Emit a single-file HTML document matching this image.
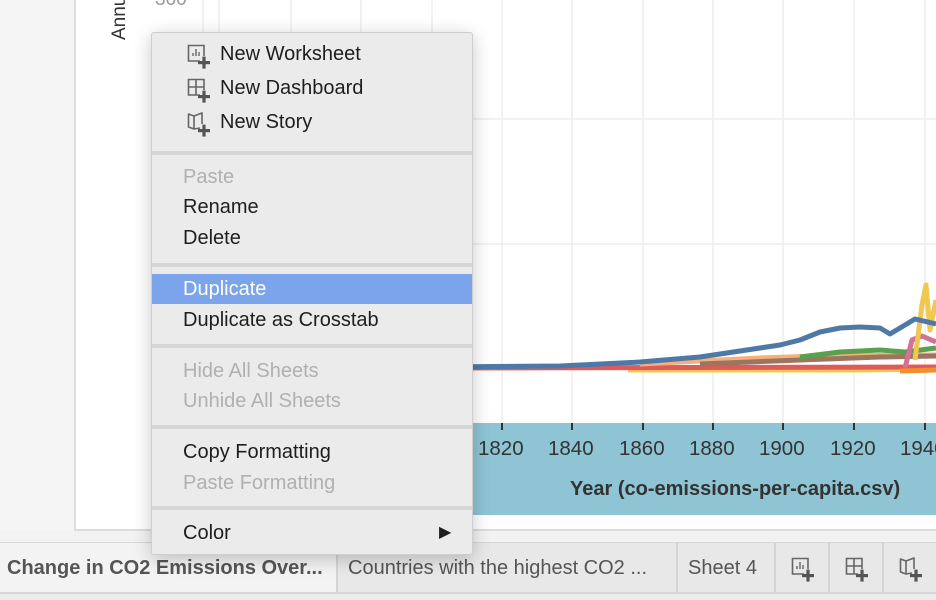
<!DOCTYPE html>
<html><head><meta charset="utf-8"><style>
*{margin:0;padding:0;box-sizing:border-box}
body{width:936px;height:600px;overflow:hidden;background:#f5f5f5;font-family:"Liberation Sans",sans-serif;position:relative}
.abs{position:absolute}
.menu{left:151px;top:32px;width:322px;height:523px;background:#ebebeb;border:1px solid #cfcfcf;box-shadow:0 4px 18px rgba(0,0,0,.22);border-radius:3px}
.mi{position:absolute;left:31px;font-size:20px;color:#1e1e1e;line-height:24px;white-space:nowrap}
.dis{color:#b0b0b0}
.sep{position:absolute;left:0;right:0;height:4px;background:#d6d6d6}
.tab{position:absolute;top:543px;height:49px;font-size:20px;line-height:51px;color:#555;border-right:2px solid #d4d4d4;white-space:nowrap;overflow:hidden}
.yr{position:absolute;top:437px;font-size:20.5px;color:#333}
</style></head><body>
<div class="abs" style="left:74px;top:0;width:862px;height:531px;background:#fff;border-left:2px solid #ddd;border-bottom:2px solid #ddd"></div>
<svg class="abs" style="left:0;top:0" width="936" height="531">
<g stroke="#eeeeee" stroke-width="1.5">
<line x1="203" y1="0" x2="203" y2="423"/>
<line x1="219" y1="0" x2="219" y2="423"/><line x1="291" y1="0" x2="291" y2="423"/><line x1="361" y1="0" x2="361" y2="423"/><line x1="432" y1="0" x2="432" y2="423"/><line x1="502" y1="0" x2="502" y2="423"/><line x1="572" y1="0" x2="572" y2="423"/><line x1="643" y1="0" x2="643" y2="423"/><line x1="713" y1="0" x2="713" y2="423"/><line x1="783" y1="0" x2="783" y2="423"/><line x1="854" y1="0" x2="854" y2="423"/><line x1="925" y1="0" x2="925" y2="423"/>
<line x1="203" y1="119" x2="936" y2="119"/><line x1="203" y1="244" x2="936" y2="244"/>
</g>
<rect x="203" y="423" width="733" height="92" fill="#8ec4d4"/>
<g stroke="#333" stroke-width="2"><line x1="502" y1="423" x2="502" y2="430"/><line x1="572" y1="423" x2="572" y2="430"/><line x1="643" y1="423" x2="643" y2="430"/><line x1="713" y1="423" x2="713" y2="430"/><line x1="783" y1="423" x2="783" y2="430"/><line x1="854" y1="423" x2="854" y2="430"/><line x1="925" y1="423" x2="925" y2="430"/></g>
<g fill="none" stroke-width="5" stroke-linejoin="round">
<polyline stroke="#f0c850" points="628,370 860,370 936,369"/>
<polyline stroke="#e05a5a" points="440,368 936,367"/>
<polyline stroke="#f6b07a" points="640,364 760,358 820,356 936,355"/>
<polyline stroke="#9c7560" points="700,364 800,360 880,357 936,356"/>
<polyline stroke="#59a14f" points="800,357 840,352 880,350 905,352 936,348"/>
<polyline stroke="#d37295" points="905,368 912,340 922,336 936,342"/>
<polyline stroke="#f0c850" points="915,360 922,305 926,285 930,330 936,300"/>
<polyline stroke="#f28e2b" points="900,371 936,370"/>
<polyline stroke="#4e79a7" points="440,367 560,366 640,362 700,357 740,351 780,345 800,340 820,332 840,328 860,327 880,328 890,334 900,328 915,319 936,324"/>
</g>
<text transform="translate(125,40) rotate(-90)" font-size="19" fill="#333" font-family="Liberation Sans">Annual</text>
<text x="155" y="5" font-size="19" fill="#999" font-family="Liberation Sans">300</text>
</svg>
<div class="yr" style="left:478px">1820</div><div class="yr" style="left:548px">1840</div><div class="yr" style="left:619px">1860</div><div class="yr" style="left:689px">1880</div><div class="yr" style="left:759px">1900</div><div class="yr" style="left:830px">1920</div><div class="yr" style="left:900px">1940</div>
<div class="abs" style="left:570px;top:478px;font-size:20px;color:#333;font-weight:bold">Year (co-emissions-per-capita.csv)</div>
<div class="abs" style="left:0;top:531px;width:936px;height:12px;background:#f2f2f2;border-bottom:1px solid #d8d8d8"></div>
<div class="abs" style="left:0;top:543px;width:936px;height:49px;background:#e8e8e8"></div>
<div class="tab" style="left:0;width:338px;background:#f3f3f3;font-weight:bold;padding-left:7px;color:#555">Change in CO2 Emissions Over...</div>
<div class="tab" style="left:338px;width:340px;padding-left:10px">Countries with the highest CO2 ...</div>
<div class="tab" style="left:678px;width:98px;padding-left:10px">Sheet 4</div>
<div class="tab" style="left:776px;width:54px"></div>
<div class="tab" style="left:830px;width:54px"></div>
<div class="abs" style="left:0;top:592px;width:936px;height:8px;background:#ececec;border-top:2px solid #d6d6d6"></div>
<svg class="abs" style="left:0;top:0" width="936" height="600">
<defs>
<g id="plus"><rect x="11" y="17" width="12" height="3.2" fill="#555"/><rect x="15.4" y="12.6" width="3.2" height="12" fill="#555"/></g>
<g id="ws"><path d="M13 17 H1.5 V1.5 H17 V12" fill="none" stroke="#666" stroke-width="1.6"/><path d="M6 12V9M9 12V5M12 12V8" stroke="#666" stroke-width="1.4"/><use href="#plus"/></g>
<g id="db"><path d="M13 17 H1.5 V1.5 H17 V12 M1.5 9 H17 M9 1.5 V17" fill="none" stroke="#666" stroke-width="1.6"/><use href="#plus"/></g>
<g id="st"><path d="M13 16 L7 17 L1.5 15 V2 L7 4 L15 1 V12 M7 4 V17" fill="none" stroke="#666" stroke-width="1.6" stroke-linejoin="round"/><use href="#plus"/></g>
</defs>
<use href="#ws" x="791" y="557"/><use href="#db" x="845" y="557"/><use href="#st" x="899" y="557"/>
</svg>
<div class="abs menu">
<svg class="abs" style="left:35px;top:11px" width="30" height="110">
<use href="#ws" x="0" y="0"/><use href="#db" x="0" y="34"/><use href="#st" x="0" y="68"/>
</svg>
<div class="mi" style="left:68px;top:9px">New Worksheet</div>
<div class="mi" style="left:68px;top:43px">New Dashboard</div>
<div class="mi" style="left:68px;top:77px">New Story</div>
<div class="sep" style="top:118px"></div>
<div class="mi dis" style="top:132px">Paste</div>
<div class="mi" style="top:162px">Rename</div>
<div class="mi" style="top:193px">Delete</div>
<div class="sep" style="top:230px"></div>
<div class="abs" style="left:0;right:0;top:241px;height:30px;background:#7ca4ea"></div>
<div class="mi" style="top:244px;color:#fff">Duplicate</div>
<div class="mi" style="top:275px">Duplicate as Crosstab</div>
<div class="sep" style="top:311px"></div>
<div class="mi dis" style="top:326px">Hide All Sheets</div>
<div class="mi dis" style="top:356px">Unhide All Sheets</div>
<div class="sep" style="top:392px"></div>
<div class="mi" style="top:407px">Copy Formatting</div>
<div class="mi dis" style="top:438px">Paste Formatting</div>
<div class="sep" style="top:473px"></div>
<div class="mi" style="top:488px">Color</div>
<div class="mi" style="left:287px;top:488px;font-size:16px">&#9654;</div>
</div>
</body></html>
